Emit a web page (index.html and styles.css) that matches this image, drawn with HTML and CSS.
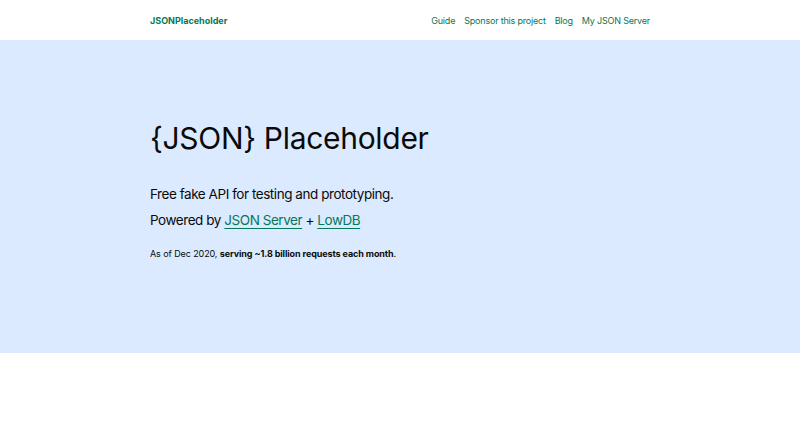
FILE: index.html
```html
<!DOCTYPE html>
<html>
<head>
<meta charset="utf-8">
<link rel="stylesheet" href="styles.css">
</head>
<body>
<header class="header">
  <div class="container header-inner">
    <a class="brand" href="#">JSONPlaceholder</a>
    <nav class="nav">
      <a href="#">Guide</a>
      <a href="#">Sponsor this project</a>
      <a href="#">Blog</a>
      <a href="#">My JSON Server</a>
    </nav>
  </div>
</header>
<section class="hero">
  <div class="container">
    <h1 class="title">{JSON} Placeholder</h1>
    <p class="lead">Free fake API for testing and prototyping.</p>
    <p class="lead">Powered by <a href="#">JSON Server</a> + <a href="#">LowDB</a></p>
    <p class="note">As of Dec 2020, <strong>serving ~1.8 billion requests each month</strong>.</p>
  </div>
</section>
</body>
</html>
```
FILE: styles.css
```css
* { box-sizing: border-box; }
body {
  margin: 0;
  font-family: Inter, "Noto Sans", sans-serif;
  color: #0a0a0a;
  background: #fff;
}
a { color: #047857; text-decoration: none; }
.container { width: 500px; margin: 0 auto; }
.header { height: 40px; }
.header-inner {
  height: 40px;
  display: flex;
  align-items: center;
  justify-content: space-between;
  font-size: 9px;
}
.brand { font-weight: 700; }
.nav { display: flex; gap: 9px; letter-spacing: -0.2px; }
.hero {
  background: #dbeafe;
  height: 313px;
  padding-top: 78px;
}
.title {
  margin: 0 0 26px;
  font-size: 30px;
  font-weight: 400;
  line-height: 40px;
  letter-spacing: -0.3px;
}
.lead {
  margin: 0 0 6px;
  font-size: 13.5px;
  line-height: 20px;
  letter-spacing: -0.45px;
}
.lead a { text-decoration: underline; text-underline-offset: 3px; text-decoration-thickness: 1px; }
.note {
  margin: 17px 0 0;
  font-size: 9px;
  line-height: 14px;
  letter-spacing: -0.1px;
}
```
